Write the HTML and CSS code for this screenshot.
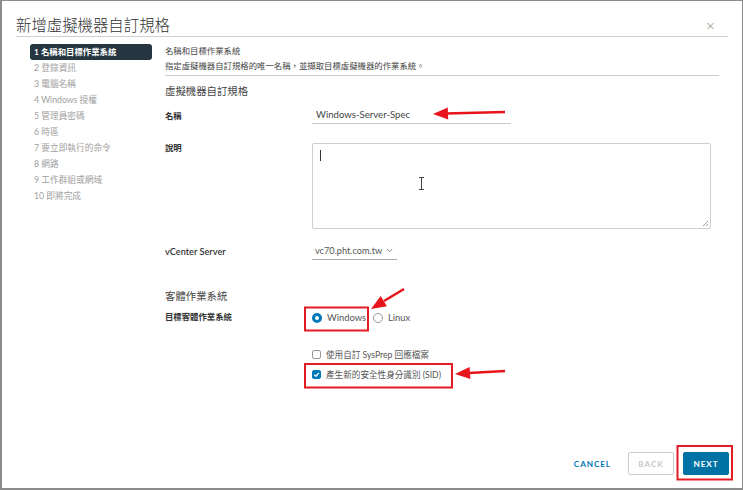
FILE: index.html
```html
<!DOCTYPE html>
<html lang="zh-Hant">
<head>
<meta charset="utf-8">
<title>新增虛擬機器自訂規格</title>
<link rel="stylesheet" href="styles.css">
</head>
<body>
<div class="frame">
  <header class="header">
    <h1 class="title">新增虛擬機器自訂規格</h1>
    <span class="close">×</span>
  </header>
  <div class="main">
    <nav class="steps">
      <div class="step active">1 名稱和目標作業系統</div>
      <div class="step">2 登錄資訊</div>
      <div class="step">3 電腦名稱</div>
      <div class="step">4 Windows 授權</div>
      <div class="step">5 管理員密碼</div>
      <div class="step">6 時區</div>
      <div class="step">7 要立即執行的命令</div>
      <div class="step">8 網路</div>
      <div class="step">9 工作群組或網域</div>
      <div class="step">10 即將完成</div>
    </nav>
    <section class="content">
      <div class="intro">
        <div class="intro-title">名稱和目標作業系統</div>
        <div class="intro-desc">指定虛擬機器自訂規格的唯一名稱，並擷取目標虛擬機器的作業系統。</div>
      </div>
      <h2 class="group-title first">虛擬機器自訂規格</h2>
      <div class="row row-name">
        <label class="label">名稱</label>
        <div class="input">Windows-Server-Spec</div>
      </div>
      <div class="row row-desc">
        <label class="label">說明</label>
        <div class="textarea"><span class="caret"></span>
          <svg class="grip" width="7" height="7" viewBox="0 0 7 7"><path d="M6 1L1 6M6 4L4 6" stroke="#888" stroke-width="0.8"/></svg>
        </div>
      </div>
      <div class="row row-vc">
        <label class="label">vCenter Server</label>
        <div class="select">vc70.pht.com.tw <svg class="chev" width="7" height="5" viewBox="0 0 7 5"><path d="M0.8 1L3.5 3.6L6.2 1" fill="none" stroke="#777" stroke-width="0.9"/></svg></div>
      </div>
      <h2 class="group-title second">客體作業系統</h2>
      <div class="row row-os">
        <label class="label">目標客體作業系統</label>
        <div class="radios">
          <span class="radio-opt"><span class="radio checked"></span>Windows</span>
          <span class="radio-opt"><span class="radio"></span>Linux</span>
        </div>
      </div>
      <div class="checks">
        <div class="check-opt"><span class="checkbox"></span>使用自訂 SysPrep 回應檔案</div>
        <div class="check-opt"><span class="checkbox checked"><svg width="9" height="9" viewBox="0 0 9 9"><path d="M2.2 4.6L3.9 6.2L6.9 2.9" fill="none" stroke="#fff" stroke-width="1.3"/></svg></span>產生新的安全性身分識別 (SID)</div>
      </div>
    </section>
  </div>
  <footer class="footer">
    <button class="btn-link">CANCEL</button>
    <button class="btn btn-disabled">BACK</button>
    <button class="btn btn-primary">NEXT</button>
  </footer>
</div>
<svg class="annotations" width="743" height="490" viewBox="0 0 743 490">
  <g stroke="#e8141c" fill="#e8141c">
    <line x1="505" y1="112" x2="446" y2="113.6" stroke-width="2.5"/>
    <polygon points="433,114 448.2,119.6 447.8,107.6" stroke="none"/>
    <line x1="404" y1="289" x2="384" y2="301" stroke-width="2.5"/>
    <polygon points="371,309 386.9,306.3 380.7,296.1" stroke="none"/>
    <line x1="505" y1="371" x2="469" y2="373" stroke-width="2.5"/>
    <polygon points="455,374 470.4,379.1 469.6,367.1" stroke="none"/>
  </g>
  <g fill="none" stroke="#e31b23" stroke-width="2">
    <rect x="305" y="307.5" width="63" height="23"/>
    <rect x="305" y="364" width="147" height="23.5"/>
    <rect x="677.5" y="446" width="54.5" height="33.5"/>
  </g>
  <g stroke="#444" stroke-width="1" fill="none">
    <path d="M421.5 177.5V189.5M419 177.5H424M419 189.5H424"/>
  </g>
</svg>
</body>
</html>
```
FILE: styles.css
```css
html, body {
  margin: 0;
  padding: 0;
  background: #fff;
}
body {
  position: relative;
  width: 743px;
  height: 490px;
  overflow: hidden;
  font-family: "Lato", "Noto Sans CJK TC", "Noto Sans", sans-serif;
  color: #333;
}
.frame {
  width: 743px;
  height: 490px;
  box-sizing: border-box;
  border: 1px solid #8c8c8c;
  border-left-width: 2px;
  border-bottom-width: 2px;
  display: flex;
  flex-direction: column;
  background: #fff;
}
.header {
  height: 36px;
  box-sizing: border-box;
  margin: 0 14px 0 14px;
  padding-top: 10px;
  border-bottom: 1px solid #cfcfcf;
  display: flex;
  justify-content: space-between;
  align-items: center;
}
.title {
  margin: 0;
  font-family: "Noto Sans CJK TC", sans-serif;
  font-weight: 300;
  font-size: 15.4px;
  line-height: 24px;
  color: #333;
}
.close {
  font-family: "DejaVu Sans", sans-serif;
  font-size: 13px;
  color: #888;
  margin-right: 12px;
  margin-top: 4px;
  font-weight: 300;
}
.main {
  display: grid;
  grid-template-columns: 122px 1fr;
  column-gap: 13px;
  padding: 7px 23px 0 28px;
}
.steps {
  display: flex;
  flex-direction: column;
}
.step {
  height: 16px;
  line-height: 16px;
  padding-left: 4px;
  font-size: 8.7px;
  color: #a0a0a0;
  white-space: nowrap;
}
.step.active {
  background: #253640;
  color: #fff;
  font-weight: 700;
  font-size: 8.4px;
  border-radius: 3px;
}
.content {
  display: flex;
  flex-direction: column;
}
.intro {
  border-bottom: 1px solid #cccccc;
  padding-bottom: 1px;
}
.intro-title, .intro-desc {
  font-size: 8.4px;
  line-height: 15px;
  color: #444;
  white-space: nowrap;
}
.group-title {
  margin: 0;
  font-weight: 400;
  font-size: 10.4px;
  line-height: 16px;
  color: #444;
}
.group-title.first { margin-top: 7px; }
.group-title.second { margin-top: 28px; }
.row {
  display: grid;
  grid-template-columns: 147px auto;
  align-items: center;
}
.label {
  font-size: 8.4px;
  font-weight: 700;
  color: #333;
}
.row-name { margin-top: 7px; height: 18px; }
.input {
  width: 199px;
  height: 18px;
  box-sizing: border-box;
  border-bottom: 1px solid #c9c9c9;
  padding-left: 4px;
  font-size: 9.6px;
  line-height: 17px;
  color: #444;
}
.row-desc {
  margin-top: 19px;
  align-items: start;
}
.row-desc .label { line-height: 11px; }
.textarea {
  position: relative;
  width: 399px;
  height: 86px;
  box-sizing: border-box;
  border: 1px solid #cfcfcf;
  border-radius: 2px;
  padding: 6px 7px;
}
.caret {
  display: block;
  width: 1px;
  height: 11px;
  background: #333;
}
.grip {
  position: absolute;
  right: 1px;
  bottom: 1px;
}
.row-vc { margin-top: 13px; height: 18px; }
.row-vc .label { font-size: 9.2px; font-weight: 600; }
.select {
  width: 85px;
  height: 18px;
  box-sizing: border-box;
  border-bottom: 1px solid #a9a9a9;
  padding-left: 3px;
  font-size: 9.2px;
  line-height: 17px;
  color: #555;
  display: flex;
  align-items: center;
  gap: 4px;
  white-space: nowrap;
}
.row-os {
  height: 27px;
  align-items: start;
}
.row-os .label { padding-top: 8px; line-height: 11px; }
.radios {
  display: flex;
  align-items: center;
  gap: 7px;
  padding-top: 8px;
  font-size: 9.4px;
  line-height: 12px;
  color: #555;
}
.radio-opt {
  display: inline-flex;
  align-items: center;
  gap: 5px;
}
.radio {
  width: 10px;
  height: 10px;
  box-sizing: border-box;
  border-radius: 50%;
  border: 1px solid #9a9a9a;
  background: #fff;
}
.radio.checked {
  border: 3.2px solid #0079b8;
  background: #fff;
}
.checks {
  margin-top: 13px;
  padding-left: 147px;
  display: flex;
  flex-direction: column;
}
.check-opt {
  height: 20px;
  display: flex;
  align-items: center;
  gap: 5px;
  font-size: 8.6px;
  color: #555;
  white-space: nowrap;
}
.checkbox {
  width: 9px;
  height: 9px;
  box-sizing: border-box;
  border: 1px solid #9a9a9a;
  border-radius: 2px;
  display: inline-flex;
}
.checkbox.checked {
  background: #0079b8;
  border-color: #0079b8;
}
.checkbox svg { margin: -1px; }
.footer {
  margin-top: auto;
  display: flex;
  justify-content: flex-end;
  align-items: center;
  gap: 9px;
  padding: 0 13px 13px 0;
}
button {
  font-family: "Lato", "Noto Sans", sans-serif;
  font-weight: 700;
  font-size: 8.2px;
  letter-spacing: 0.9px;
  cursor: pointer;
}
.btn-link {
  background: none;
  border: none;
  color: #0079b8;
  padding: 0;
  margin-right: 8px;
  height: 23px;
}
.btn {
  width: 46px;
  height: 23px;
  border-radius: 2px;
  padding: 0;
}
.btn-disabled {
  background: #fff;
  border: 1px solid #cccccc;
  color: #c8c8c8;
}
.btn-primary {
  background: #0072a3;
  border: 1px solid #0072a3;
  color: #fff;
}
.annotations {
  position: absolute;
  left: 0;
  top: 0;
  pointer-events: none;
}
```
